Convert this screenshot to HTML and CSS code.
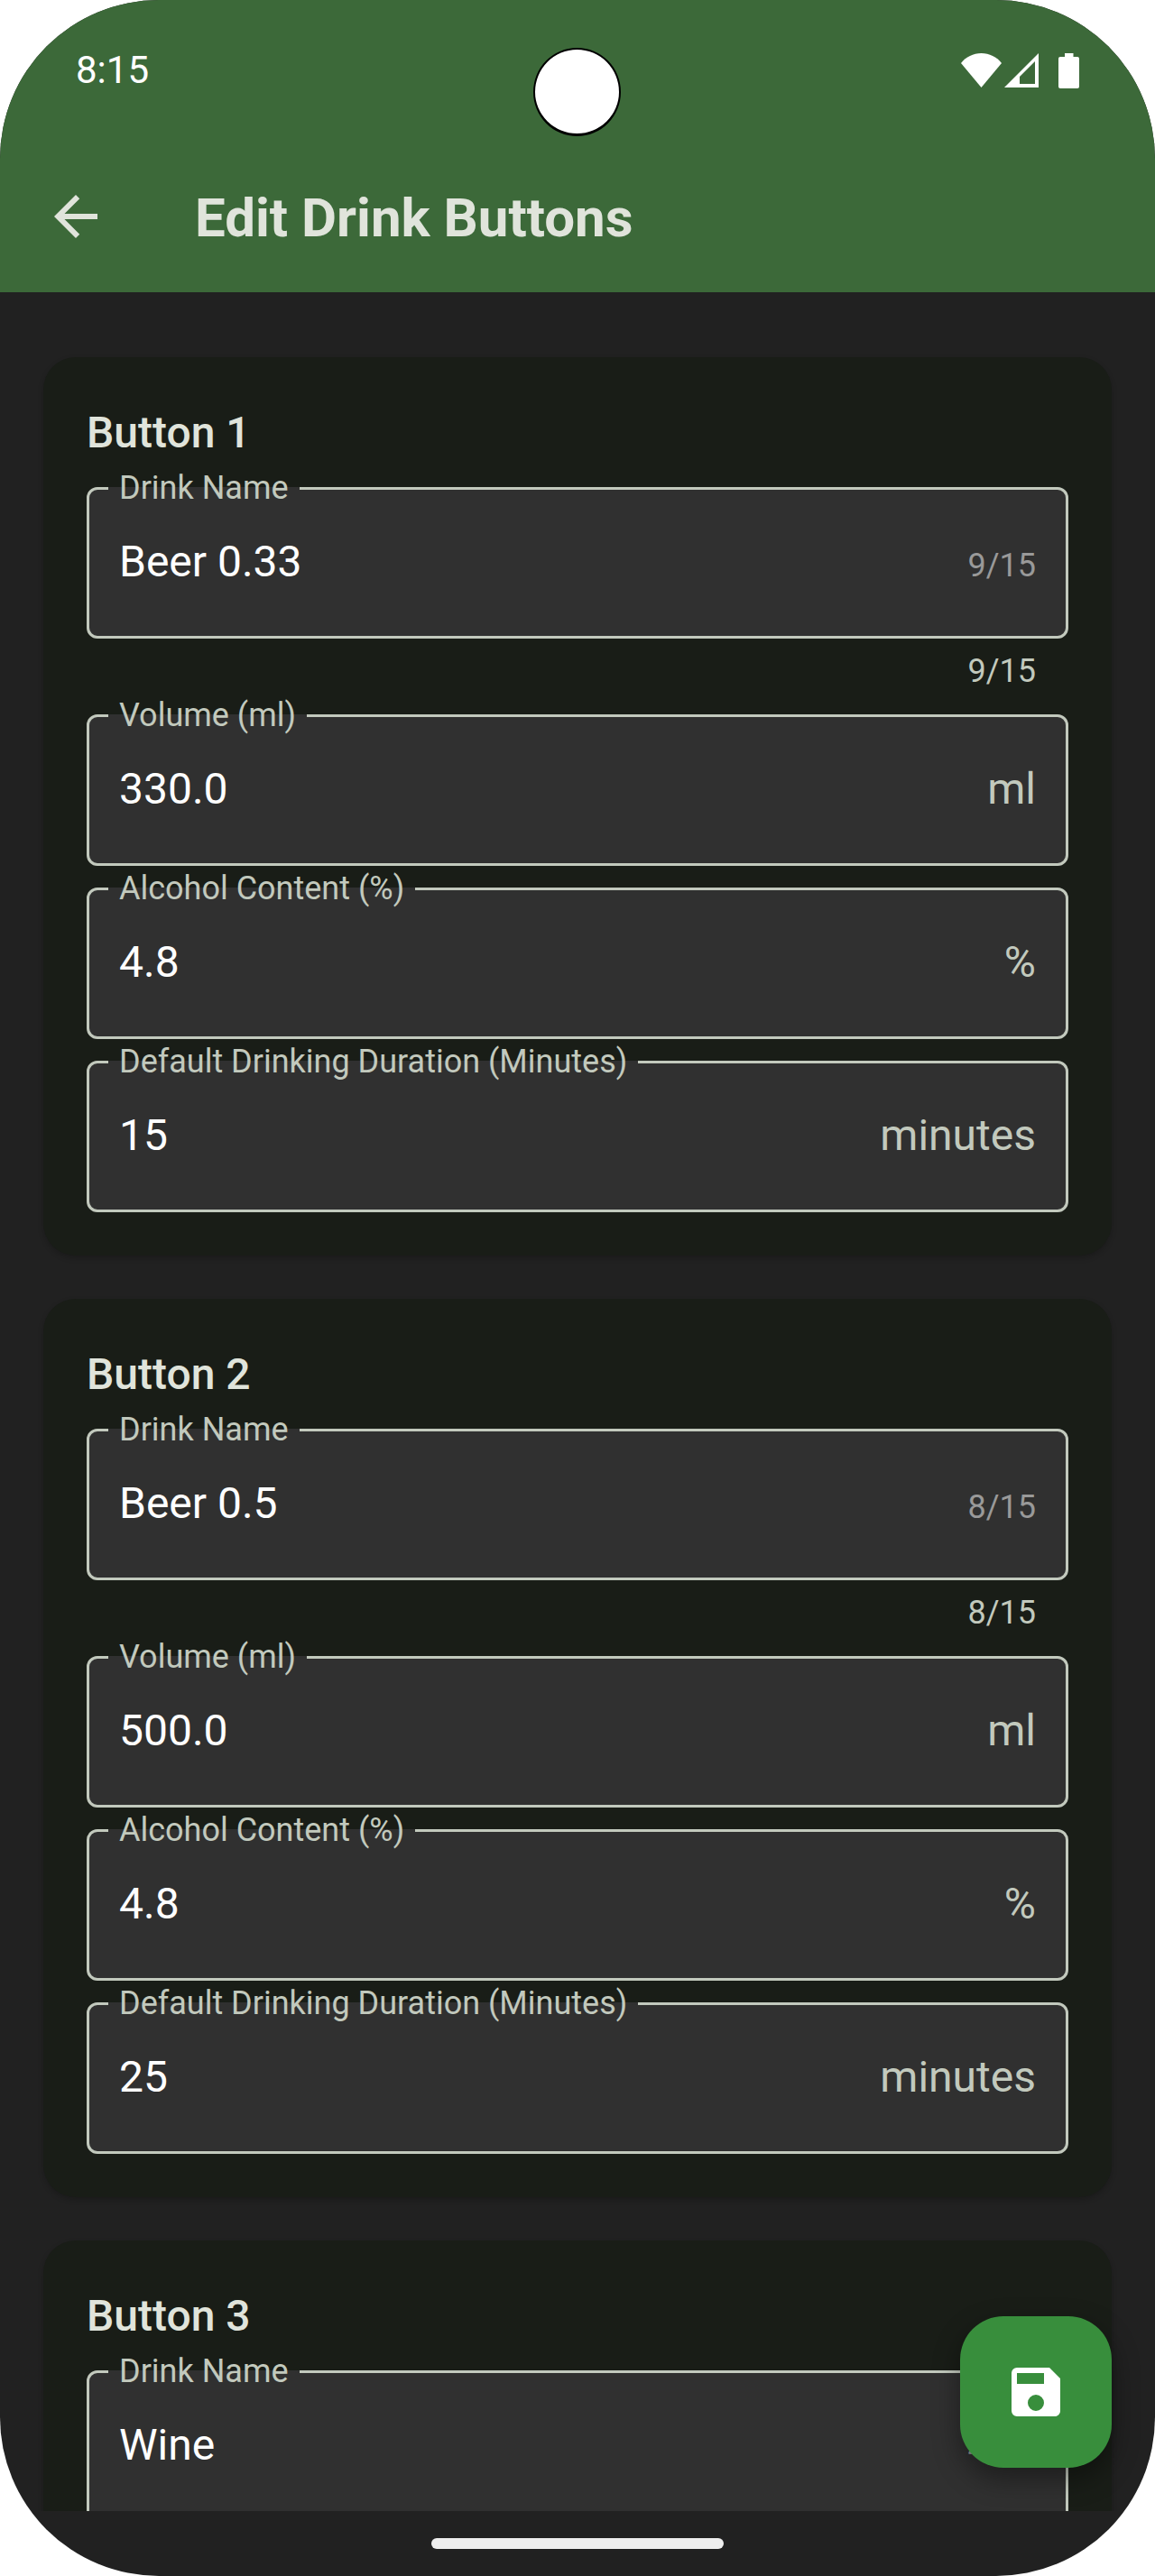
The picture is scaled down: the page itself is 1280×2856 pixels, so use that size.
FILE: index.html
```html
<!DOCTYPE html>
<html lang="en">
<head>
    <meta charset="utf-8">
    <title>Edit Drink Buttons</title>
    <link rel="stylesheet" href="styles.css">
</head>
<body>
    <div class="screen">
        <div class="status-bar">
            <span class="time">8:15</span>
            <div class="status-icons">
                <svg class="wifi" viewBox="0 0 45 38"><path d="M22.5 38 0 11C5.500 4 13.500 0 22.500 0S39.500 4 45 11z"/></svg>
                <svg class="signal" viewBox="0 0 38 38"><path fill-rule="evenodd" d="M38 0v38H0zM34 9 17 26v8h17z"/></svg>
                <svg class="battery" viewBox="0 0 23 39"><path d="M7 0h9.500v4H21a2 2 0 0 1 2 2v31a2 2 0 0 1-2 2H2a2 2 0 0 1-2-2V6a2 2 0 0 1 2-2h5z"/></svg>
            </div>
            <div class="camera"></div>
        </div>

        <header class="app-bar">
            <button class="back" type="button" aria-label="Back">
                <svg viewBox="0 0 24 24"><path d="M20 11H7.830l5.590-5.590L12 4l-8 8 8 8 1.410-1.410L7.830 13H20z"/></svg>
            </button>
            <h1>Edit Drink Buttons</h1>
        </header>

        <main class="content">
            <section class="card">
                <h2>Button 1</h2>
                <fieldset class="field">
                    <legend><label for="name1">Drink Name</label></legend>
                    <div class="row">
                        <input type="text" id="name1" value="Beer 0.33" maxlength="15">
                        <span class="count">9/15</span>
                    </div>
                </fieldset>
                <p class="helper">9/15</p>
                <fieldset class="field">
                    <legend><label for="volume1">Volume (ml)</label></legend>
                    <div class="row">
                        <input type="text" id="volume1" value="330.0">
                        <span class="unit">ml</span>
                    </div>
                </fieldset>
                <fieldset class="field">
                    <legend><label for="alcohol1">Alcohol Content (%)</label></legend>
                    <div class="row">
                        <input type="text" id="alcohol1" value="4.8">
                        <span class="unit">%</span>
                    </div>
                </fieldset>
                <fieldset class="field">
                    <legend><label for="duration1">Default Drinking Duration (Minutes)</label></legend>
                    <div class="row">
                        <input type="text" id="duration1" value="15">
                        <span class="unit">minutes</span>
                    </div>
                </fieldset>
            </section>

            <section class="card">
                <h2>Button 2</h2>
                <fieldset class="field">
                    <legend><label for="name2">Drink Name</label></legend>
                    <div class="row">
                        <input type="text" id="name2" value="Beer 0.5" maxlength="15">
                        <span class="count">8/15</span>
                    </div>
                </fieldset>
                <p class="helper">8/15</p>
                <fieldset class="field">
                    <legend><label for="volume2">Volume (ml)</label></legend>
                    <div class="row">
                        <input type="text" id="volume2" value="500.0">
                        <span class="unit">ml</span>
                    </div>
                </fieldset>
                <fieldset class="field">
                    <legend><label for="alcohol2">Alcohol Content (%)</label></legend>
                    <div class="row">
                        <input type="text" id="alcohol2" value="4.8">
                        <span class="unit">%</span>
                    </div>
                </fieldset>
                <fieldset class="field">
                    <legend><label for="duration2">Default Drinking Duration (Minutes)</label></legend>
                    <div class="row">
                        <input type="text" id="duration2" value="25">
                        <span class="unit">minutes</span>
                    </div>
                </fieldset>
            </section>

            <section class="card">
                <h2>Button 3</h2>
                <fieldset class="field">
                    <legend><label for="name3">Drink Name</label></legend>
                    <div class="row">
                        <input type="text" id="name3" value="Wine" maxlength="15">
                        <span class="count">4/15</span>
                    </div>
                </fieldset>
            </section>
        </main>

        <button class="save" type="button" aria-label="Save">
            <svg viewBox="0 0 24 24"><path d="M17 3H5a2 2 0 0 0-2 2v14a2 2 0 0 0 2 2h14c1.100 0 2-.9 2-2V7zm-5 16a3 3 0 1 1 0-6 3 3 0 0 1 0 6zm3-10H5V5h10z"/></svg>
        </button>

        <div class="nav-bar">
            <div class="handle"></div>
        </div>
    </div>
</body>
</html>
```
FILE: styles.css
```css
* {
    box-sizing: border-box;
}
body {
    margin: 0;
    background-color: white;
    font-family: Roboto, sans-serif;
}
.screen {
    position: relative;
    display: flex;
    flex-direction: column;
    height: 100vh;
    overflow: hidden;
    border-radius: 176px;
    background-color: #212121;
    color: #e0e4db;
}

/* status bar */
.status-bar {
    position: relative;
    flex: none;
    display: flex;
    justify-content: space-between;
    align-items: center;
    height: 156px;
    padding: 0 84px;
    background-color: #3c6939;
    color: white;
}
.time {
    font-size: 42px;
    line-height: 48px;
}
.status-icons {
    display: flex;
    align-items: center;
    fill: white;
}
.wifi {
    width: 45px;
    height: 38px;
    margin-right: 3px;
}
.signal {
    width: 38px;
    height: 38px;
    margin-right: 22px;
}
.battery {
    width: 23px;
    height: 39px;
}
.camera {
    position: absolute;
    top: 53px;
    left: 50%;
    width: 97px;
    height: 98px;
    margin-left: -49px;
    border: 2px solid black;
    border-bottom-width: 3px;
    border-radius: 50%;
    background-color: white;
}

/* app bar */
.app-bar {
    flex: none;
    display: flex;
    align-items: center;
    gap: 96px;
    height: 168px;
    padding: 0 48px;
    background-color: #3c6939;
}
.back {
    width: 72px;
    height: 72px;
    padding: 0;
    border: none;
    background: none;
    fill: #e0e4db;
    cursor: pointer;
}
.back svg,
.save svg {
    display: block;
    width: 72px;
    height: 72px;
}
h1 {
    margin: 0;
    padding-top: 4px;
    font-size: 60px;
    line-height: 72px;
    font-weight: 700;
}

/* cards */
.content {
    flex: 1;
    min-height: 0;
    overflow: hidden;
    display: flex;
    flex-direction: column;
    gap: 48px;
    padding: 72px 48px;
}
.card {
    flex: none;
    padding: 48px;
    border-radius: 36px;
    background-color: #191d17;
    box-shadow: 0 3px 6px rgba(0, 0, 0, 0.2);
}
h2 {
    margin: 0;
    font-size: 48px;
    line-height: 72px;
    font-weight: 500;
}

/* outlined text fields */
.field {
    min-width: 0;
    margin: 0;
    padding: 19px 21px 47px;
    border: 3px solid #c2c9bd;
    border-radius: 12px;
    background-color: #303030;
}
.field legend {
    padding: 0 12px;
    font-size: 36px;
    line-height: 51px;
    color: #c2c9bd;
}
.field legend label {
    display: block;
}
.row {
    display: flex;
    align-items: baseline;
    gap: 12px;
    height: 72px;
    padding: 0 12px;
    line-height: 72px;
}
.row input {
    flex: 1;
    min-width: 0;
    height: 72px;
    padding: 0;
    border: none;
    outline: none;
    background: none;
    color: white;
    font-family: inherit;
    font-size: 48px;
}
.unit {
    font-size: 48px;
    color: #c2c9bd;
}
.count {
    font-size: 36px;
    line-height: 48px;
    color: #999999;
}
.helper {
    margin: 12px 36px 0;
    font-size: 36px;
    line-height: 48px;
    text-align: right;
    color: #c2c9bd;
}

.save {
    position: absolute;
    right: 48px;
    bottom: 120px;
    padding: 48px;
    border: none;
    border-radius: 48px;
    background-color: #388e3c;
    fill: white;
    box-shadow: 0 12px 30px rgba(0, 0, 0, 0.4);
    cursor: pointer;
}

.nav-bar {
    flex: none;
    display: flex;
    justify-content: center;
    align-items: center;
    height: 72px;
}
.handle {
    width: 324px;
    height: 12px;
    border-radius: 6px;
    background-color: #eeeeee;
}
```
